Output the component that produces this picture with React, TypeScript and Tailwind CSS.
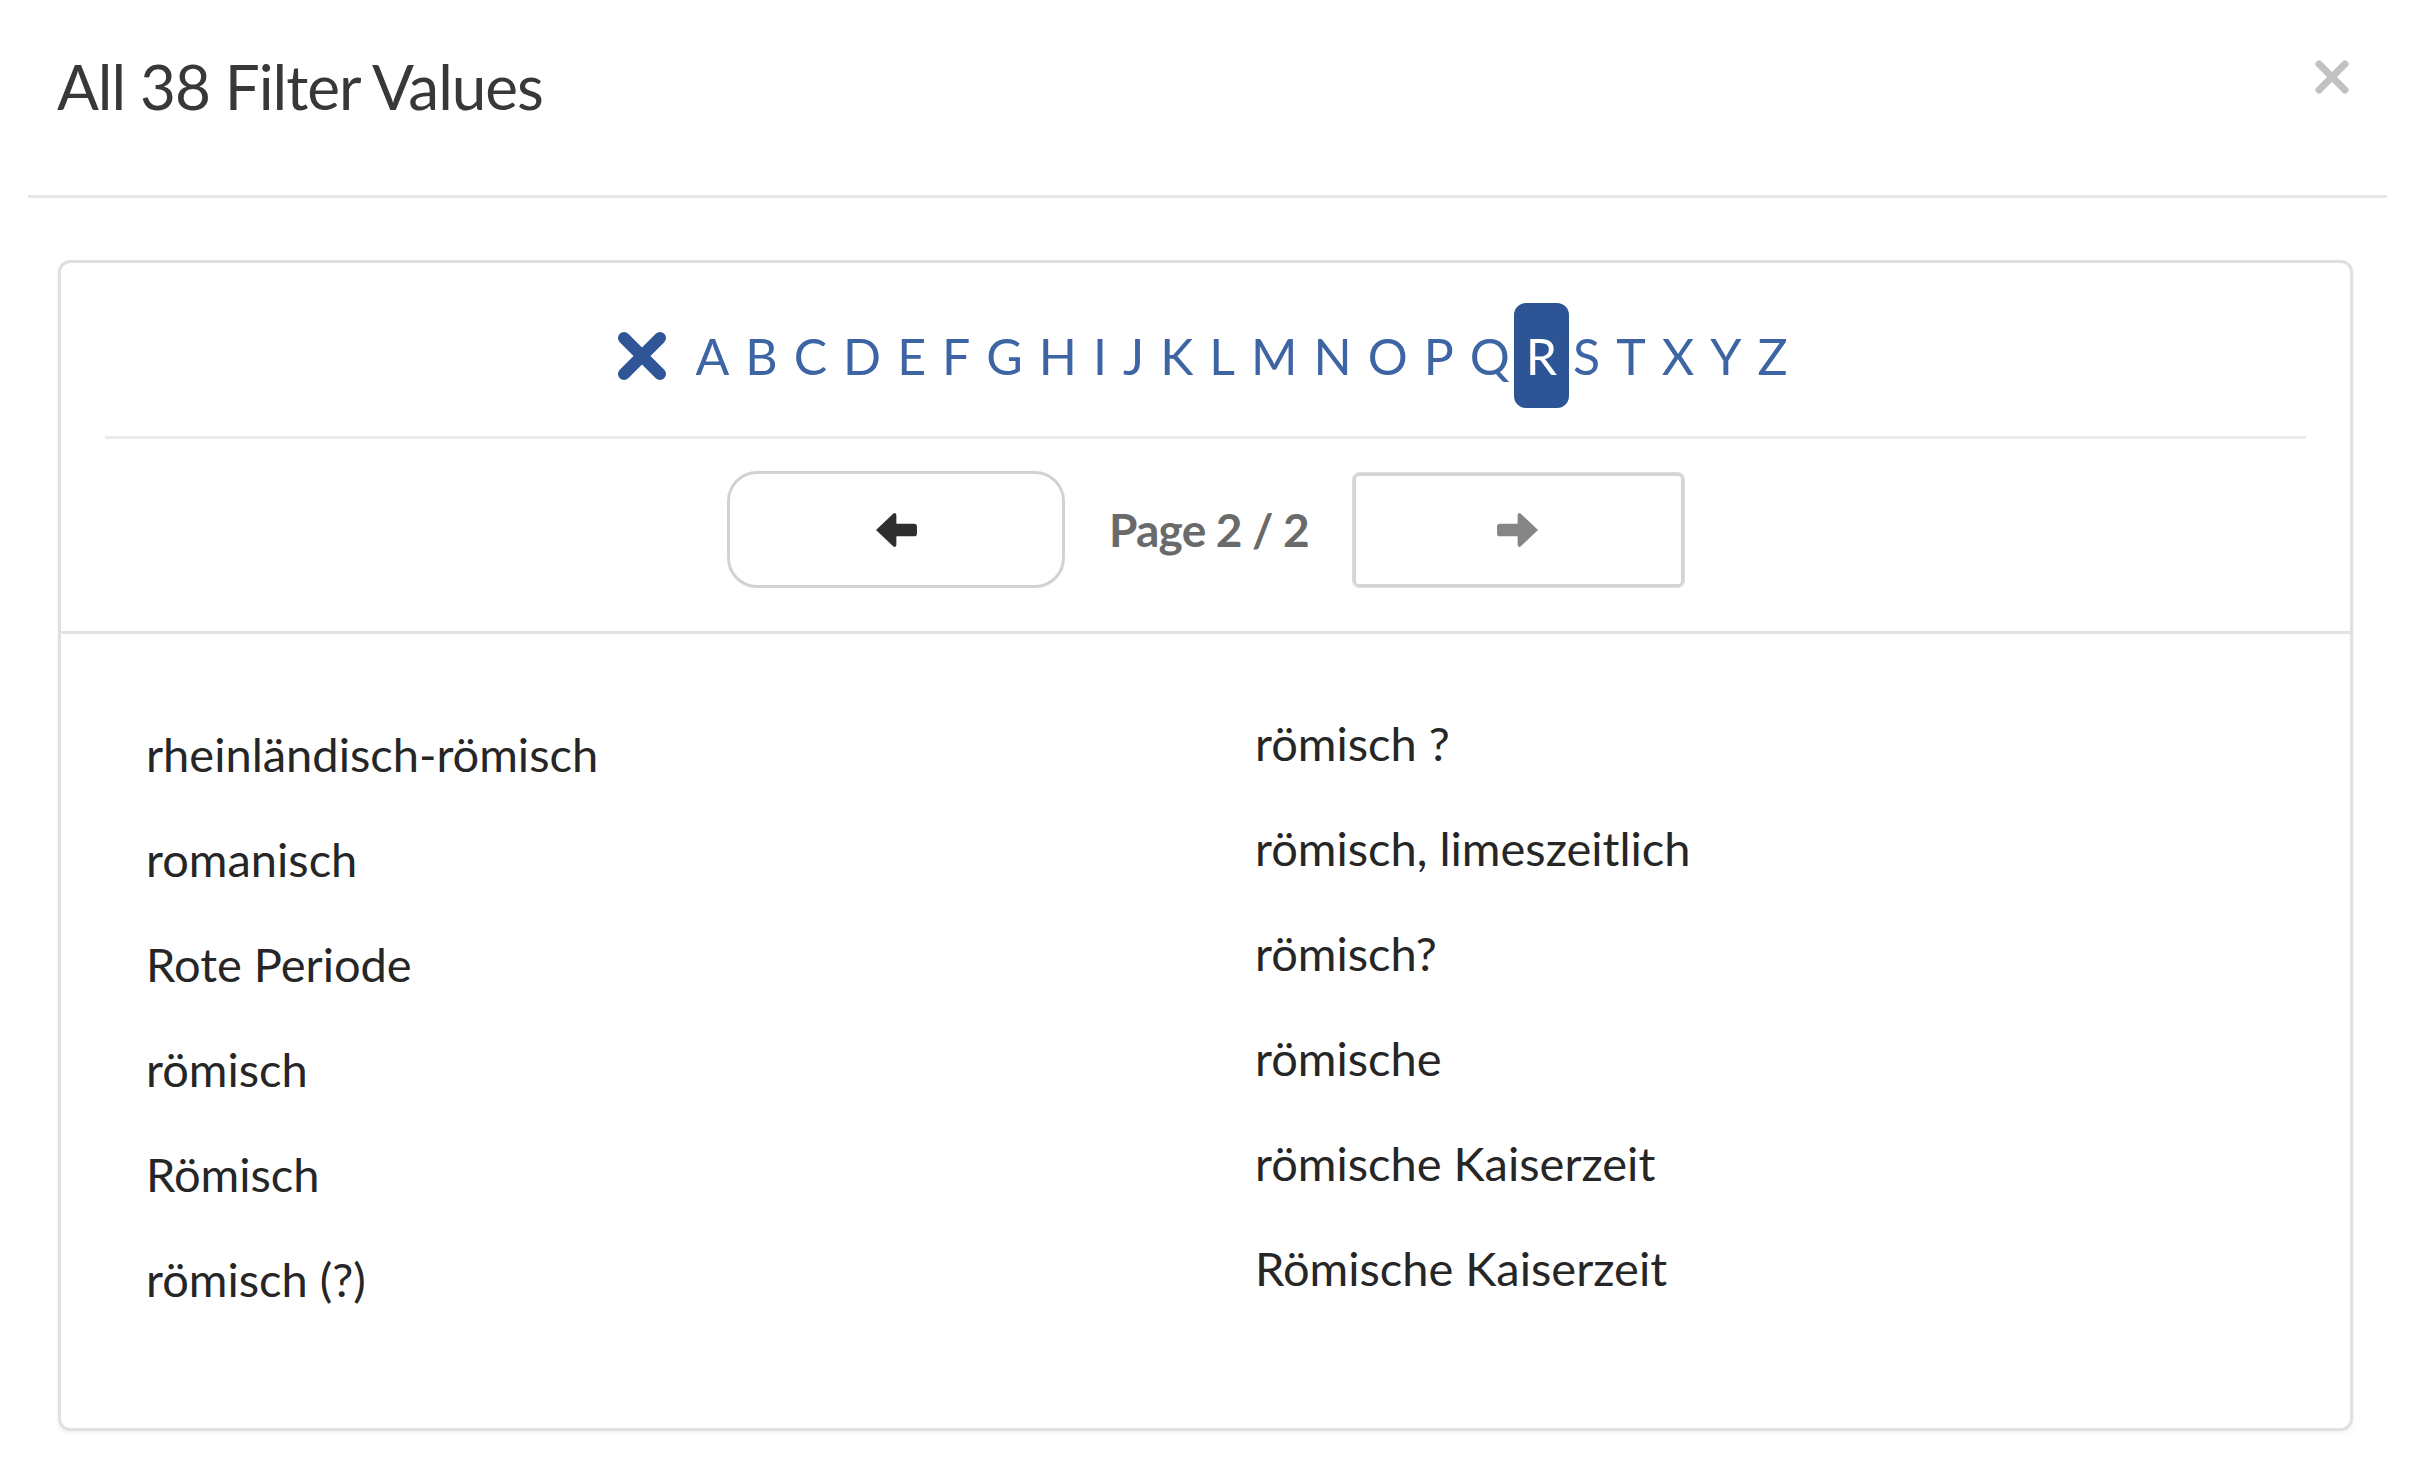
import React from 'react';

const LETTERS = ['A', 'B', 'C', 'D', 'E', 'F', 'G', 'H', 'I', 'J', 'K', 'L', 'M', 'N', 'O', 'P', 'Q', 'R', 'S', 'T', 'X', 'Y', 'Z'];

const LEFT_VALUES = ['rheinländisch-römisch', 'romanisch', 'Rote Periode', 'römisch', 'Römisch', 'römisch (?)'];
const RIGHT_VALUES = ['römisch ?', 'römisch, limeszeitlich', 'römisch?', 'römische', 'römische Kaiserzeit', 'Römische Kaiserzeit'];

// Bold "x" used to reset the letter filter
function ClearIcon() {
  return (
    <svg width="52" height="50" viewBox="0 0 52 50">
      <path d="M8 7 L44 43 M44 7 L8 43" stroke="#2f5597" strokeWidth="12" strokeLinecap="round" />
    </svg>
  );
}

function CloseIcon() {
  return (
    <svg width="36" height="38" viewBox="0 0 36 38">
      <path d="M5 6 L31 32 M31 6 L5 32" stroke="#c2c2c2" strokeWidth="7" strokeLinecap="round" />
    </svg>
  );
}

function Arrow({ dir, color }: { dir: 'left' | 'right'; color: string }) {
  return (
    <svg
      width="46"
      height="40"
      viewBox="0 0 24 21"
      className={dir === 'right' ? 'rotate-180' : ''}
    >
      <path
        d="M1.5 10.5 L10.5 2 Q11.8 1 12.2 2.6 L12.2 7.2 L21.5 7.2 Q23 7.2 23 8.7 L23 12.3 Q23 13.8 21.5 13.8 L12.2 13.8 L12.2 18.4 Q11.8 20 10.5 19 Z"
        fill={color}
      />
    </svg>
  );
}

function LetterBar({ active }: { active: string }) {
  return (
    <div className="flex items-center justify-center pt-[40px] pb-[28px]">
      <button className="mr-[20px] flex items-center">
        <ClearIcon />
      </button>
      {LETTERS.map((l) =>
        l === active ? (
          <span
            key={l}
            className="-mx-[4px] flex h-[105px] items-center rounded-[12px] bg-[#2d5596] px-[12px] text-white"
          >
            {l}
          </span>
        ) : (
          <span key={l} className="flex h-[105px] items-center px-[8px] text-[#3d65a3]">
            {l}
          </span>
        ),
      )}
    </div>
  );
}

function Pager() {
  return (
    <div className="flex items-center justify-center gap-[44px] pt-[32px] pb-[43px]">
      <button className="flex h-[117px] w-[338px] items-center justify-center rounded-[30px] border-[3px] border-[#d2d2d2] bg-white">
        <Arrow dir="left" color="#2e2e2e" />
      </button>
      <span className="text-[46px] font-bold tracking-[-0.8px] text-[#6a6a6a]">Page 2 / 2</span>
      <button className="flex h-[114px] w-[331px] items-center justify-center rounded-[6px] border-[3px] border-[#d4d4d4] bg-white outline outline-1 outline-[#dddddd]">
        <Arrow dir="right" color="#858585" />
      </button>
    </div>
  );
}

export default function App() {
  return (
    <div className="h-[1469px] w-full bg-white font-['Lato',sans-serif]">
      {/* Modal header */}
      <div className="mx-[28px] flex items-start justify-between border-b-[3px] border-[#e6e6e6] pl-[29px] pr-[37px] h-[198px]">
        <h1 className="pt-[55px] text-[62px] leading-none tracking-[-1px] text-[#383838]">All 38 Filter Values</h1>
        <button className="mt-[58px]">
          <CloseIcon />
        </button>
      </div>

      {/* Filter panel */}
      <div className="ml-[58px] mr-[62px] mt-[62px] h-[1171px] rounded-[12px] border-[3px] border-[#e0e0e0] shadow-[0_2px_4px_rgba(0,0,0,0.06)]">
        <div className="text-[50px] leading-none">
          <LetterBar active="R" />
        </div>
        <div className="mx-[44px] border-t-[3px] border-[#ebebeb]" />
        <Pager />
        <div className="border-t-[3px] border-[#e3e3e3]" />

        <div className="flex pl-[85px] text-[47px] leading-[105px] text-[#262626]">
          <ul className="w-[1109px] pt-[68px]">
            {LEFT_VALUES.map((v) => (
              <li key={v}>{v}</li>
            ))}
          </ul>
          <ul className="pt-[57px]">
            {RIGHT_VALUES.map((v) => (
              <li key={v}>{v}</li>
            ))}
          </ul>
        </div>
      </div>
    </div>
  );
}
